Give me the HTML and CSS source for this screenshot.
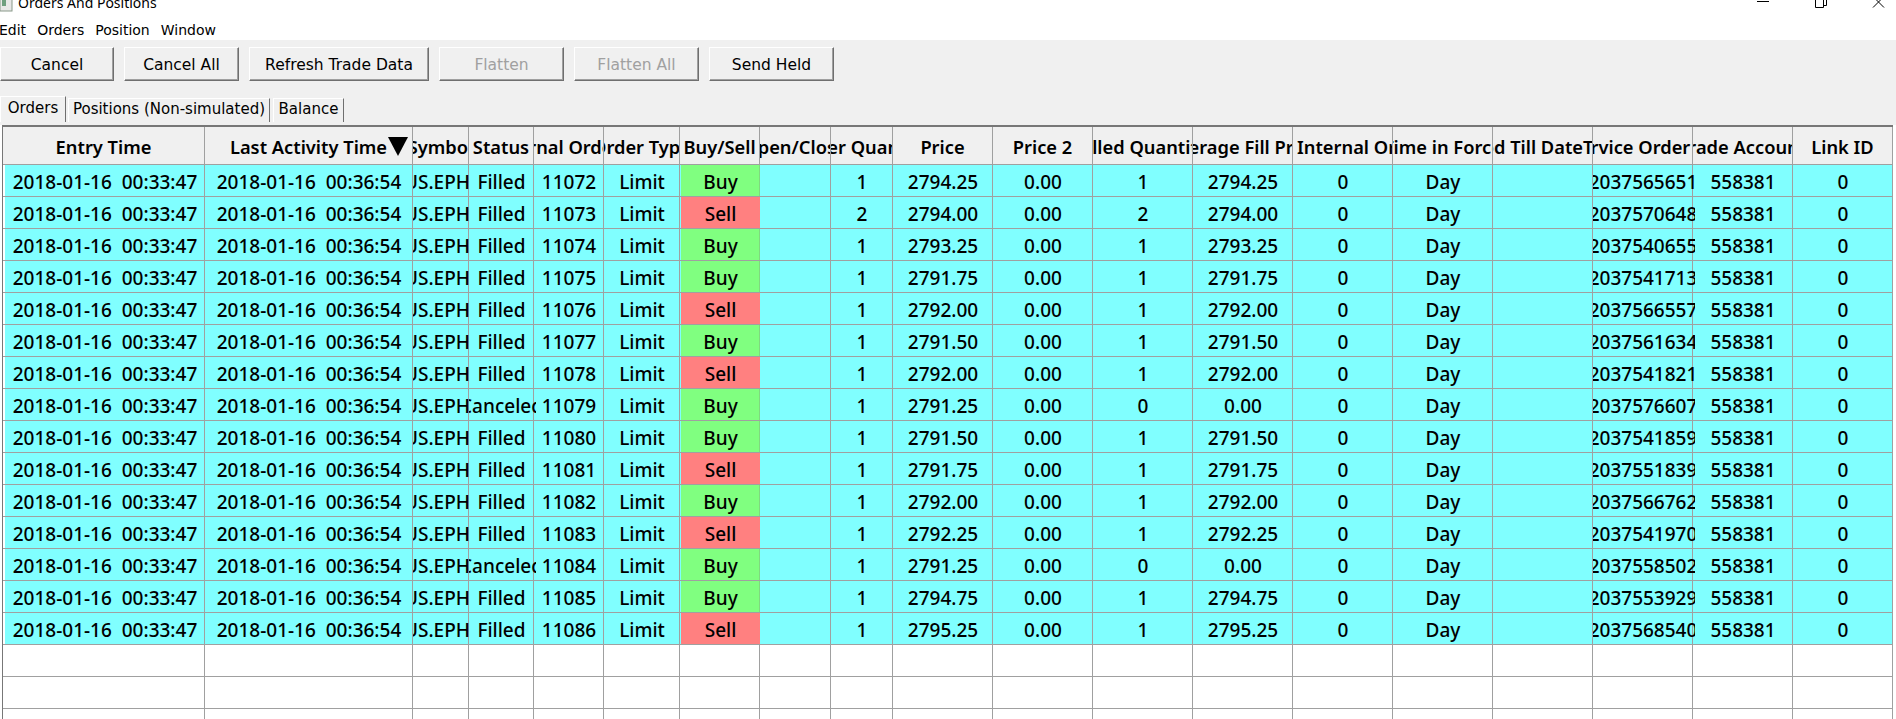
FILE: index.html
```html
<!DOCTYPE html>
<html lang="en">
<head>
  <meta charset="UTF-8">
  <title>Orders And Positions</title>
  <link rel="stylesheet" href="styles.css">
</head>
<body>
  <div class="titlebar">
    <svg class="app-icon" width="13" height="13" viewBox="0 0 13 13"><rect x="0" y="0" width="12" height="12" fill="#e8e8e8" stroke="#8a9a8a"/><rect x="2" y="0" width="4" height="7" fill="#6f9f7f"/></svg>
    <span class="title-text">Orders And Positions</span>
    <div class="win-buttons">
      <svg width="14" height="14" viewBox="0 0 14 14"><path d="M1 1.5H13" stroke="#000" fill="none"/></svg>
      <svg width="14" height="14" viewBox="0 0 14 14"><path d="M1.5 -1.5H9.5V7.5H1.5ZM3.5 -1.5V-4.5H12.5V5.5H9.5" stroke="#000" fill="none"/></svg>
      <svg width="14" height="14" viewBox="0 0 14 14"><path d="M1 7.5L12 -3.5M12 7.5L1 -3.5" stroke="#000" fill="none"/></svg>
    </div>
  </div>
  <div class="menubar">
    <span>Edit</span>
    <span>Orders</span>
    <span>Position</span>
    <span>Window</span>
  </div>
  <div class="toolbar">
    <button class="btn btn-first">Cancel</button>
    <button class="btn btn-cancel-all">Cancel All</button>
    <button class="btn btn-refresh">Refresh Trade Data</button>
    <button class="btn" disabled>Flatten</button>
    <button class="btn" disabled>Flatten All</button>
    <button class="btn">Send Held</button>
  </div>
  <div class="tabs">
    <div class="tab active">Orders</div>
    <div class="tab tab-positions">Positions (Non-simulated)</div>
    <div class="tab tab-balance">Balance</div>
  </div>
  <div class="grid" id="grid"></div>

  <script>
    const headers = ['Entry Time', 'Last Activity Time', 'Symbol', 'Status', 'Internal Order ID', 'Order Type', 'Buy/Sell', 'Open/Close', 'Order Quantity', 'Price', 'Price 2', 'Filled Quantity', 'Average Fill Price', 'Internal Order ID', 'Time in Force', 'Good Till DateTime', 'Service Order ID', 'Trade Account', 'Link ID'];
    // id, side, qty, price, filled, service order id
    const orders = [
      [11072, 'Buy', 1, '2794.25', 1, '2037565651'],
      [11073, 'Sell', 2, '2794.00', 2, '2037570648'],
      [11074, 'Buy', 1, '2793.25', 1, '2037540655'],
      [11075, 'Buy', 1, '2791.75', 1, '2037541713'],
      [11076, 'Sell', 1, '2792.00', 1, '2037566557'],
      [11077, 'Buy', 1, '2791.50', 1, '2037561634'],
      [11078, 'Sell', 1, '2792.00', 1, '2037541821'],
      [11079, 'Buy', 1, '2791.25', 0, '2037576607'],
      [11080, 'Buy', 1, '2791.50', 1, '2037541859'],
      [11081, 'Sell', 1, '2791.75', 1, '2037551839'],
      [11082, 'Buy', 1, '2792.00', 1, '2037566762'],
      [11083, 'Sell', 1, '2792.25', 1, '2037541970'],
      [11084, 'Buy', 1, '2791.25', 0, '2037558502'],
      [11085, 'Buy', 1, '2794.75', 1, '2037553929'],
      [11086, 'Sell', 1, '2795.25', 1, '2037568540']
    ];
    const grid = document.querySelector('#grid');

    function addRow(cells, rowClass) {
      const row = document.createElement('div');
      row.className = 'row ' + rowClass;
      cells.forEach((text, i) => {
        const cell = document.createElement('div');
        cell.className = 'cell';
        const inner = document.createElement('div');
        inner.className = 'cell-text';
        const span = document.createElement('span');
        span.textContent = text;
        inner.appendChild(span);
        cell.appendChild(inner);
        if (rowClass === 'order' && i === 6) cell.classList.add(text === 'Buy' ? 'buy' : 'sell');
        row.appendChild(cell);
      });
      grid.appendChild(row);
      return row;
    }

    const head = addRow(headers, 'head');
    head.children[1].classList.add('sorted');
    head.children[13].classList.add('cell-left');

    orders.forEach((o) => {
      const filled = o[4] > 0;
      addRow([
        '2018-01-16  00:33:47', '2018-01-16  00:36:54', 'F.US.EPH18', filled ? 'Filled' : 'Canceled',
        o[0], 'Limit', o[1], '', o[2], o[3], '0.00', o[4], filled ? o[3] : '0.00',
        0, 'Day', '', o[5], '558381', 0
      ], 'order');
    });
    for (let i = 0; i < 3; i++) addRow(headers.map(() => ''), 'empty');
  </script>
</body>
</html>
```

FILE: styles.css
```css
* {
  margin: 0;
  padding: 0;
  box-sizing: border-box;
}
html, body {
  width: 1896px;
  height: 719px;
  overflow: hidden;
  background: #fff;
}
body {
  font-family: "Noto Sans", sans-serif;
}
.titlebar {
  height: 20px;
  display: flex;
  align-items: flex-end;
  overflow: hidden;
  font-size: 14px;
}
.app-icon {
  margin: 0 5px 8px 0;
  flex: none;
}
.title-text {
  line-height: 20px;
  margin-bottom: 7px;
}
.win-buttons {
  margin-left: auto;
  display: flex;
  gap: 44px;
  padding-right: 10px;
  align-self: flex-start;
}
.menubar {
  height: 20px;
  display: flex;
  gap: 11px;
  margin-left: -1px;
  font-family: "DejaVu Sans", sans-serif;
  font-size: 14px;
  line-height: 20px;
}
.toolbar {
  height: 44px;
  background: #f0f0f0;
  display: flex;
  gap: 10px;
  padding-top: 7px;
}
.btn {
  height: 34px;
  width: 125px;
  padding-top: 1px;
  font-family: "DejaVu Sans", sans-serif;
  font-size: 15.5px;
  color: #000;
  background: #f0f0f0;
  border: 1px solid;
  border-color: #fff #6f6f6f #6f6f6f #fff;
  box-shadow: inset -1px -1px 0 #a0a0a0;
}
.btn:disabled {
  color: #a0a0a0;
}
.btn-first {
  width: 114px;
}
.btn-cancel-all {
  width: 115px;
}
.btn-refresh {
  width: 180px;
}
.tabs {
  height: 41px;
  background: #f0f0f0;
  display: flex;
  align-items: flex-end;
  gap: 2px;
  padding-bottom: 3px;
  font-family: "DejaVu Sans", sans-serif;
  font-size: 15px;
}
.tab {
  height: 24px;
  line-height: 21px;
  text-align: center;
  white-space: nowrap;
  border: 1px solid #fff;
  border-right: 1px solid #6f6f6f;
  border-bottom: none;
}
.tab.active {
  width: 66px;
  height: 26px;
  line-height: 22px;
}
.tab-positions {
  width: 202px;
}
.tab-balance {
  width: 71px;
  margin-left: 1px;
}
.grid {
  margin-left: 2px;
  width: 1891px;
  border-top: 2px solid #777;
  border-left: 1px solid #777;
}
.row {
  display: grid;
  grid-template-columns: 202px 208px 56px 65px 70px 76px 80px 71px 62px 100px 100px 100px 100px 100px 100px 100px 100px 100px 100px;
  height: 32px;
  border-bottom: 1px solid #a0a0a0;
}
.row.head {
  height: 38px;
  background: #f0f0f0;
}
.cell {
  position: relative;
  display: flex;
  border-right: 1px solid #a0a0a0;
  font-size: 19px;
  font-weight: 500;
  min-width: 0;
}
/* text runs a little past the column line, like the real grid control */
.cell-text {
  position: relative;
  z-index: 1;
  flex: none;
  width: calc(100% + 3px);
  margin-right: -3px;
  padding-top: 2px;
  padding-right: 2px;
  display: flex;
  justify-content: center;
  align-items: center;
  overflow: hidden;
  white-space: pre;
}
.cell-text span {
  flex: none;
}
.head .cell {
  font-size: 18.3px;
  font-weight: 600;
}
.head .cell-text {
  width: 100%;
  margin-right: 0;
  padding-top: 1px;
  padding-right: 0;
}
.order .cell {
  background: #80ffff;
}
.order .cell:first-child,
.empty .cell:first-child {
  border-left: 2px solid #fff;
}
.order .cell.buy {
  background: #80ff80;
  border-left: 1px solid #80ffff;
  border-right-color: #7fd97f;
}
.order .cell.sell {
  background: #ff8080;
  border-left: 1px solid #80ffff;
  border-right-color: #ff8080;
}
.cell-left .cell-text {
  justify-content: flex-start;
  padding-left: 4px;
}
.sorted::after {
  content: "";
  position: absolute;
  top: 10px;
  right: 4px;
  border-left: 10px solid transparent;
  border-right: 10px solid transparent;
  border-top: 19px solid #000;
  z-index: 2;
}
```
